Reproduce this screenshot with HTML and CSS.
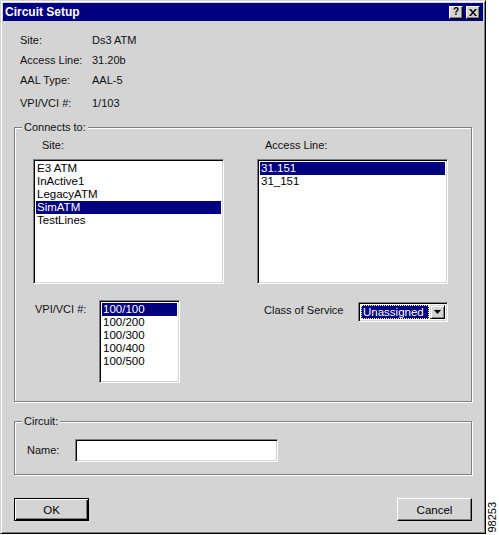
FILE: index.html
```html
<!DOCTYPE html>
<html>
<head>
<meta charset="utf-8">
<title>Circuit Setup</title>
<link rel="stylesheet" href="styles.css">
</head>
<body>
<div class="page">
  <div class="dialog">
    <div class="titlebar">
      <span class="title">Circuit Setup</span>
      <div class="tbtns">
        <span class="tbtn help">?</span>
        <span class="tbtn close"><svg width="8" height="7" viewBox="0 0 8 7"><path d="M0 0h2l2 2.5L6 0h2L5 3.5 8 7H6L4 4.5 2 7H0l3-3.5z" fill="#000"/></svg></span>
      </div>
    </div>
    <div class="content">
      <div class="info">
        <span>Site:</span><span>Ds3 ATM</span>
        <span>Access Line:</span><span>31.20b</span>
        <span>AAL Type:</span><span>AAL-5</span>
        <span>VPI/VCI #:</span><span>1/103</span>
      </div>

      <div class="group connects">
        <span class="group-label">Connects to:</span>
        <div class="cols">
          <div class="col">
            <div class="col-label site-label">Site:</div>
            <div class="listbox big">
              <div class="item">E3 ATM</div>
              <div class="item">InActive1</div>
              <div class="item">LegacyATM</div>
              <div class="item sel">SimATM</div>
              <div class="item">TestLines</div>
            </div>
          </div>
          <div class="col">
            <div class="col-label access-label">Access Line:</div>
            <div class="listbox big">
              <div class="item sel">31.151</div>
              <div class="item">31_151</div>
            </div>
          </div>
        </div>
        <div class="cols row2">
          <div class="col hrow">
            <span class="vpi-label">VPI/VCI #:</span>
            <div class="listbox vpi">
              <div class="item sel">100/100</div>
              <div class="item">100/200</div>
              <div class="item">100/300</div>
              <div class="item">100/400</div>
              <div class="item">100/500</div>
            </div>
          </div>
          <div class="col hrow">
            <span class="cos-label">Class of Service</span>
            <div class="combo">
              <span class="combo-value"><span class="focus">Unassigned</span></span>
              <span class="combo-btn"><svg width="7" height="4" viewBox="0 0 7 4"><path d="M0 0h7L3.5 4z" fill="#000"/></svg></span>
            </div>
          </div>
        </div>
      </div>

      <div class="group circuit">
        <span class="group-label">Circuit:</span>
        <div class="hrow name-row">
          <span class="name-label">Name:</span>
          <div class="textbox"></div>
        </div>
      </div>

      <div class="buttons">
        <div class="btn default">OK</div>
        <div class="btn">Cancel</div>
      </div>
    </div>
  </div>
  <div class="figno"><span>98253</span></div>
</div>
</body>
</html>
```

FILE: styles.css
```css
html, body {
  margin: 0;
  padding: 0;
  background: #fff;
}
body {
  font-family: "Liberation Sans", Arial, sans-serif;
  font-size: 11px;
  color: #111;
}
.page {
  display: flex;
  align-items: stretch;
  width: 499px;
  height: 535px;
}
.dialog {
  box-sizing: border-box;
  width: 486px;
  height: 534px;
  background: #d4d4d4;
  border: 1px solid;
  border-color: #d4d4d4 #000 #000 #d4d4d4;
  box-shadow: inset 1px 1px #fff, inset -1px -1px #808080;
  padding: 2px;
  display: flex;
  flex-direction: column;
}
.titlebar {
  height: 18px;
  background: #000080;
  display: flex;
  align-items: center;
  justify-content: space-between;
  padding: 0 3px 0 2px;
}
.title {
  color: #fff;
  font-weight: bold;
  font-size: 12px;
}
.tbtns {
  display: flex;
  gap: 3px;
}
.tbtn {
  box-sizing: border-box;
  width: 14px;
  height: 13px;
  background: #d4d4d4;
  border: 1px solid;
  border-color: #fff #000 #000 #fff;
  box-shadow: inset -1px -1px #808080;
  display: flex;
  align-items: center;
  justify-content: center;
  font-weight: bold;
  font-size: 10px;
  line-height: 1;
  color: #000;
}
.content {
  padding: 0 11px;
  display: flex;
  flex-direction: column;
}
.info {
  margin-top: 9px;
  margin-left: 6px;
  display: grid;
  grid-template-columns: 72px auto;
  grid-template-rows: 20px 20px 20px 26px;
  align-items: center;
}
.group {
  position: relative;
  box-sizing: border-box;
  border: 1px solid #808080;
  box-shadow: inset 1px 1px #fff, 1px 1px #fff;
}
.group-label {
  position: absolute;
  top: -7px;
  left: 7px;
  padding: 0 2px;
  line-height: 13px;
  background: #d4d4d4;
}
.connects {
  margin-top: 11px;
  height: 275px;
  padding: 11px 0 0 18px;
}
.cols {
  display: grid;
  grid-template-columns: 191px 191px;
  column-gap: 33px;
}
.col-label {
  line-height: 13px;
  height: 13px;
  margin-bottom: 7px;
}
.site-label { margin-left: 9px; }
.access-label { margin-left: 8px; }
.listbox {
  box-sizing: border-box;
  background: #fff;
  border: 1px solid;
  border-color: #808080 #fff #fff #808080;
  box-shadow: inset 1px 1px #000, inset -1px -1px #d4d4d4;
  padding: 2px 2px;
}
.listbox.big {
  height: 125px;
}
.item {
  height: 13px;
  line-height: 13px;
  padding-left: 1px;
  color: #000;
  font-size: 11.5px;
}
.item.sel {
  background: #000080;
  color: #fff;
}
.row2 {
  margin-top: 16px;
}
.hrow {
  display: flex;
  align-items: flex-start;
}
.vpi-label {
  width: 64px;
  margin-left: 2px;
  margin-top: 3px;
  line-height: 13px;
}
.listbox.vpi {
  width: 81px;
  height: 83px;
}
.cos-label {
  width: 94px;
  margin-left: 7px;
  margin-top: 4px;
  line-height: 13px;
}
.combo {
  box-sizing: border-box;
  width: 90px;
  height: 20px;
  margin-top: 2px;
  background: #fff;
  border: 1px solid;
  border-color: #808080 #fff #fff #808080;
  box-shadow: inset 1px 1px #000, inset -1px -1px #d4d4d4;
  padding: 2px;
  display: flex;
}
.combo-value {
  flex: 1;
  background: #000080;
  color: #fff;
  display: flex;
  align-items: center;
  margin-right: 1px;
}
.focus {
  flex: 1;
  align-self: stretch;
  display: flex;
  align-items: center;
  padding-left: 2px;
  outline: 1px dotted #ffff80;
  outline-offset: -1px;
  font-size: 11.5px;
}
.combo-btn {
  box-sizing: border-box;
  width: 15px;
  background: #d4d4d4;
  border: 1px solid;
  border-color: #d4d4d4 #000 #000 #d4d4d4;
  box-shadow: inset 1px 1px #fff, inset -1px -1px #808080;
  display: flex;
  align-items: center;
  justify-content: center;
}
.circuit {
  margin-top: 19px;
  height: 54px;
  padding: 17px 0 0 12px;
}
.name-label {
  width: 48px;
  line-height: 23px;
}
.textbox {
  box-sizing: border-box;
  width: 203px;
  height: 23px;
  background: #fff;
  border: 1px solid;
  border-color: #808080 #fff #fff #808080;
  box-shadow: inset 1px 1px #000, inset -1px -1px #d4d4d4;
}
.buttons {
  margin-top: 23px;
  display: flex;
  justify-content: space-between;
}
.btn {
  box-sizing: border-box;
  width: 75px;
  height: 23px;
  border: 1px solid;
  border-color: #fff #000 #000 #fff;
  box-shadow: inset -1px -1px #808080;
  display: flex;
  align-items: center;
  justify-content: center;
  font-size: 11.5px;
  color: #000;
}
.btn.default {
  border-color: #000;
  box-shadow: inset 1px 1px #fff, inset -1px -1px #000, inset -2px -2px #808080;
}
.figno {
  flex: 1;
  display: flex;
  flex-direction: column;
  justify-content: flex-end;
  align-items: center;
  padding-bottom: 2px;
}
.figno span {
  writing-mode: vertical-rl;
  transform: rotate(180deg);
  font-size: 11px;
  line-height: 11px;
  color: #000;
}
```
